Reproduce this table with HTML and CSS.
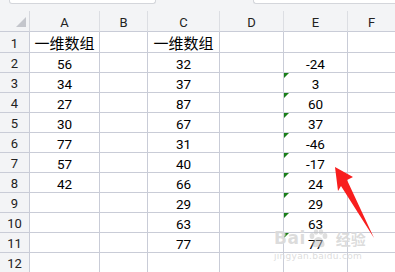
FILE: index.html
```html
<!DOCTYPE html>
<html lang="zh">
<head>
<meta charset="utf-8">
<link rel="stylesheet" href="styles.css">
</head>
<body>
<div class="page">
  <div class="topstrip">
    <div class="namebox"></div>
    <div class="formulabox"></div>
  </div>
  <div class="sheet">
    <div class="corner"><span class="tri"></span></div>
    <div class="ch">A</div><div class="ch">B</div><div class="ch">C</div><div class="ch">D</div><div class="ch">E</div><div class="ch last">F</div>

    <div class="rh r1">1</div><div class="c r1 cjk">一维数组</div><div class="c r1"></div><div class="c r1 cjk">一维数组</div><div class="c r1"></div><div class="c r1"></div><div class="c r1"></div>

    <div class="rh">2</div><div class="c">56</div><div class="c"></div><div class="c">32</div><div class="c"></div><div class="c">-24</div><div class="c"></div>
    <div class="rh">3</div><div class="c">34</div><div class="c"></div><div class="c">37</div><div class="c"></div><div class="c flag">3</div><div class="c"></div>
    <div class="rh">4</div><div class="c">27</div><div class="c"></div><div class="c">87</div><div class="c"></div><div class="c flag">60</div><div class="c"></div>
    <div class="rh">5</div><div class="c">30</div><div class="c"></div><div class="c">67</div><div class="c"></div><div class="c flag">37</div><div class="c"></div>
    <div class="rh">6</div><div class="c">77</div><div class="c"></div><div class="c">31</div><div class="c"></div><div class="c flag">-46</div><div class="c"></div>
    <div class="rh">7</div><div class="c">57</div><div class="c"></div><div class="c">40</div><div class="c"></div><div class="c flag">-17</div><div class="c"></div>
    <div class="rh">8</div><div class="c">42</div><div class="c"></div><div class="c">66</div><div class="c"></div><div class="c flag">24</div><div class="c"></div>
    <div class="rh">9</div><div class="c"></div><div class="c"></div><div class="c">29</div><div class="c"></div><div class="c flag">29</div><div class="c"></div>
    <div class="rh">10</div><div class="c"></div><div class="c"></div><div class="c">63</div><div class="c"></div><div class="c flag">63</div><div class="c"></div>
    <div class="rh">11</div><div class="c"></div><div class="c"></div><div class="c">77</div><div class="c"></div><div class="c flag">77</div><div class="c"></div>
    <div class="rh">12</div><div class="c"></div><div class="c"></div><div class="c"></div><div class="c"></div><div class="c"></div><div class="c"></div>
  </div>

  <div class="watermark">
    <div class="wm-logo"><span class="wm-bai">Bai</span><svg class="paw" width="22" height="20" viewBox="0 0 22 20"><ellipse cx="5" cy="7" rx="2.4" ry="3" /><ellipse cx="9" cy="3" rx="2.2" ry="2.8"/><ellipse cx="14" cy="3" rx="2.2" ry="2.8"/><ellipse cx="18" cy="7" rx="2.4" ry="3"/><path d="M11.5 8 C8 8 5 13 5.5 16 C6 19 9 18 11.5 18 C14 18 17 19 17.5 16 C18 13 15 8 11.5 8 Z"/></svg><span class="wm-jy">经验</span></div>
    <div class="wm-url">jingyan.baidu.com</div>
  </div>

  <svg class="arrow" width="395" height="272" viewBox="0 0 395 272">
    <polygon points="335,167 353,177 347,180 374,238 341,186 338,191" fill="#f81e1e"/>
  </svg>
</div>
</body>
</html>
```

FILE: styles.css
```css
html, body {
  margin: 0;
  padding: 0;
  background: #ffffff;
}
body {
  width: 395px;
  height: 272px;
  overflow: hidden;
  font-family: Roboto, "Noto Sans CJK SC", sans-serif;
  color: #111;
}
.page {
  position: relative;
  width: 395px;
  height: 272px;
  overflow: hidden;
}
.topstrip {
  height: 11px;
  background: #f3f4f6;
  display: flex;
  align-items: flex-start;
}
.namebox {
  margin-left: 9px;
  width: 145px;
  height: 3px;
  background: #ffffff;
  border: 1px solid #d4d6db;
  border-top: none;
  border-radius: 0 0 3px 3px;
}
.formulabox {
  margin-left: 97px;
  flex: 1;
  height: 3px;
  background: #ffffff;
  border: 1px solid #d4d6db;
  border-top: none;
  border-right: none;
  border-radius: 0 0 0 3px;
}
.sheet {
  display: grid;
  grid-template-columns: 30px 70px 48px 72px 64px 64px 1fr;
  grid-template-rows: 21px 21px repeat(11, 20px);
}
.corner, .ch, .rh, .c {
  box-sizing: border-box;
  border-right: 1px solid #c9ccd7;
  border-bottom: 1px solid #c9ccd7;
}
.corner {
  background: #f3f4f6;
  position: relative;
  border-right-color: #d6d8de;
}
.tri {
  position: absolute;
  left: 16px;
  top: 6px;
  width: 0;
  height: 0;
  border-left: 10px solid transparent;
  border-bottom: 10px solid #c4c6cc;
}
.ch {
  background: #f3f4f6;
  border-right-color: #dcdee3;
  display: flex;
  align-items: center;
  justify-content: center;
  font-size: 13px;
  color: #222;
  padding-top: 2px;
}
.ch.last {
  border-right: none;
}
.rh {
  background: #f3f4f6;
  display: flex;
  align-items: center;
  justify-content: center;
  font-size: 13px;
  color: #222;
  padding-top: 2px;
}
.c {
  display: flex;
  align-items: center;
  justify-content: center;
  font-size: 13.5px;
  color: #000;
  padding-top: 2px;
  position: relative;
}
.c:nth-child(7n) {
  border-right: none;
}
.cjk {
  font-family: "Noto Sans CJK SC", sans-serif;
  font-size: 15px;
  padding-top: 0;
}
.flag::before {
  content: "";
  position: absolute;
  left: 0;
  top: 0;
  width: 0;
  height: 0;
  border-top: 5px solid #1a7f1a;
  border-right: 5px solid transparent;
}
.watermark {
  position: absolute;
  left: 274px;
  top: 229px;
  width: 100px;
  color: rgba(190, 190, 190, 0.55);
  text-shadow: 0 0 1px rgba(255,255,255,0.9);
}
.wm-logo {
  display: flex;
  align-items: center;
  gap: 1px;
  height: 19px;
  line-height: 19px;
}
.wm-bai {
  font-family: "DejaVu Sans", sans-serif;
  font-weight: bold;
  font-size: 17px;
  letter-spacing: 0.5px;
}
.paw {
  fill: rgba(190, 190, 190, 0.5);
}
.wm-jy {
  font-family: "Noto Sans CJK SC", sans-serif;
  font-weight: bold;
  font-size: 15px;
  margin-left: 6px;
}
.wm-url {
  font-family: "DejaVu Sans", sans-serif;
  font-size: 9px;
  line-height: 10px;
  margin-top: 3px;
  letter-spacing: 0.3px;
}
.arrow {
  position: absolute;
  left: 0;
  top: 0;
  pointer-events: none;
}
```
